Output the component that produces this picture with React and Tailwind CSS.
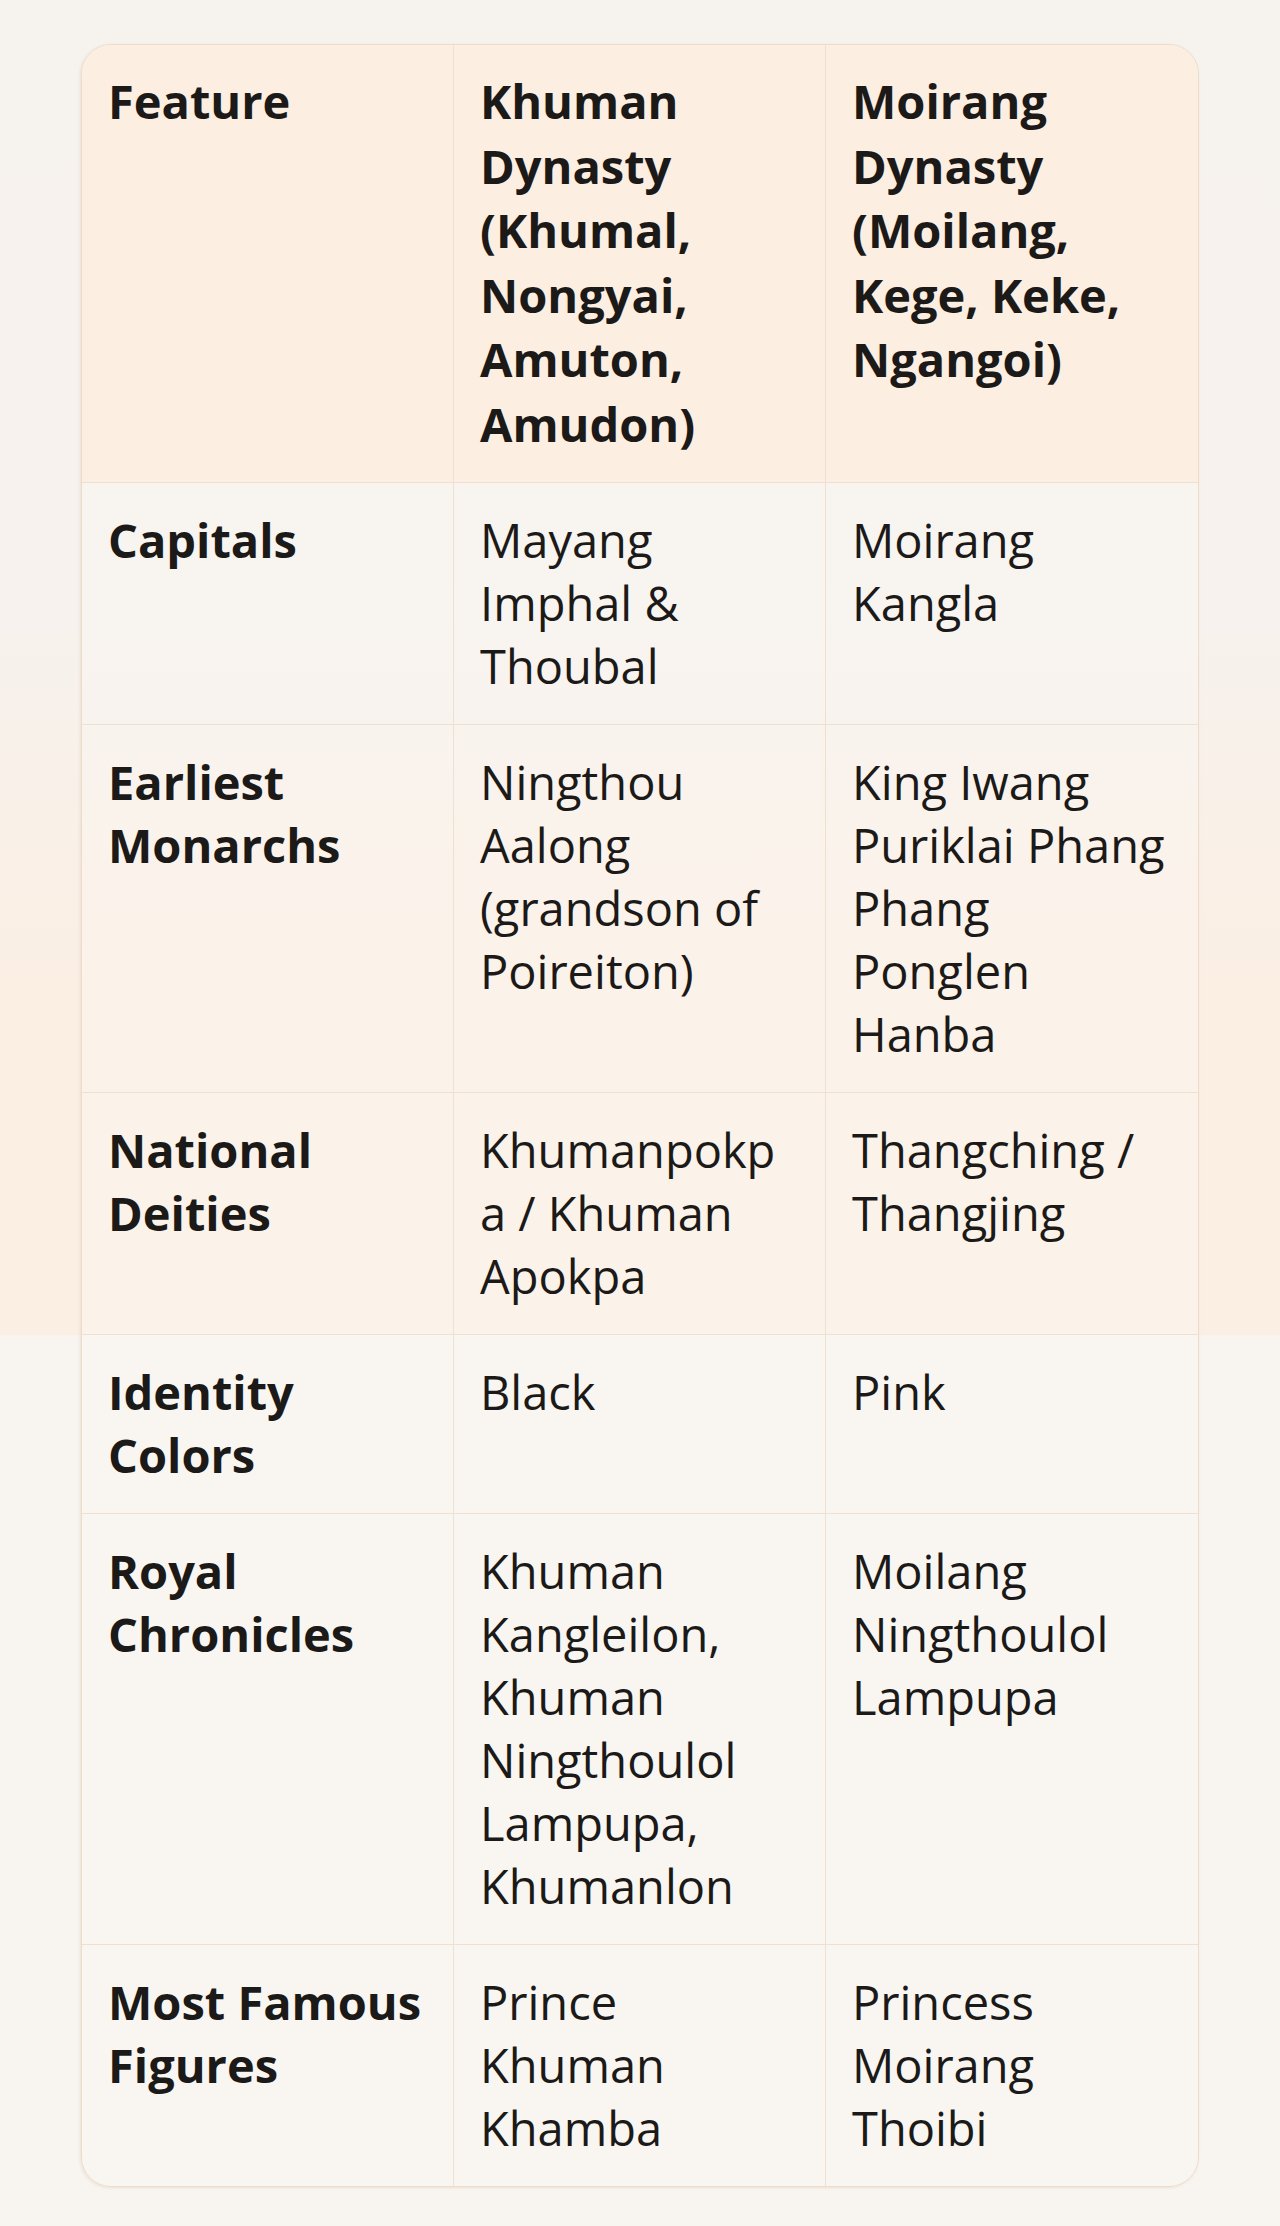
import React from "react";

const HEADERS = [
  "Feature",
  "Khuman Dynasty (Khumal, Nongyai, Amuton, Amudon)",
  "Moirang Dynasty (Moilang, Kege, Keke, Ngangoi)",
];

const ROWS = [
  ["Capitals", "Mayang Imphal & Thoubal", "Moirang Kangla"],
  ["Earliest Monarchs", "Ningthou Aalong (grandson of Poireiton)", "King Iwang Puriklai Phang Phang Ponglen Hanba"],
  ["National Deities", "Khumanpokpa / Khuman Apokpa", "Thangching / Thangjing"],
  ["Identity Colors", "Black", "Pink"],
  ["Royal Chronicles", "Khuman Kangleilon, Khuman Ningthoulol Lampupa, Khumanlon", "Moilang Ningthoulol Lampupa"],
  ["Most Famous Figures", "Prince Khuman Khamba", "Princess Moirang Thoibi"],
];

const App = () => {
  return (
    <div className="min-h-[2226px] w-full bg-[linear-gradient(to_bottom,#f6f2ed_0px,#f7f2ed_620px,#fbefe4_980px,#fbefe4_1335px,#f8f4ef_1335px,#f8f4ef_100%)] pt-[44px] px-[81px] font-['Open_Sans',sans-serif] text-[#1c1a18]">
      <div className="rounded-[30px] border border-[#eedccb] overflow-hidden shadow-[-1px_1px_3px_rgba(150,110,70,0.12)]">
        {/* Header */}
        <div className="grid grid-cols-3 bg-[#fdeee2]">
          {HEADERS.map((h, i) => (
            <div
              key={i}
              className={`pl-[26px] pr-[28px] pt-[24px] pb-[26px] text-[47px] leading-[64.5px] font-bold break-words border-b border-[#f0dfcf] ${
                i < 2 ? "border-r" : ""
              }`}
            >
              {h}
            </div>
          ))}
        </div>

        {/* Body */}
        {ROWS.map((row, r) => (
          <div key={r} className="grid grid-cols-3 bg-white/20">
            {row.map((cell, c) => (
              <div
                key={c}
                className={`pl-[26px] pr-[28px] py-[26px] text-[47px] leading-[63px] break-words border-[#f0e0d2] ${
                  c === 0 ? "font-bold" : "font-normal"
                } ${c < 2 ? "border-r" : ""} ${r < ROWS.length - 1 ? "border-b" : ""}`}
              >
                {cell}
              </div>
            ))}
          </div>
        ))}
      </div>
    </div>
  );
};

export default App;
